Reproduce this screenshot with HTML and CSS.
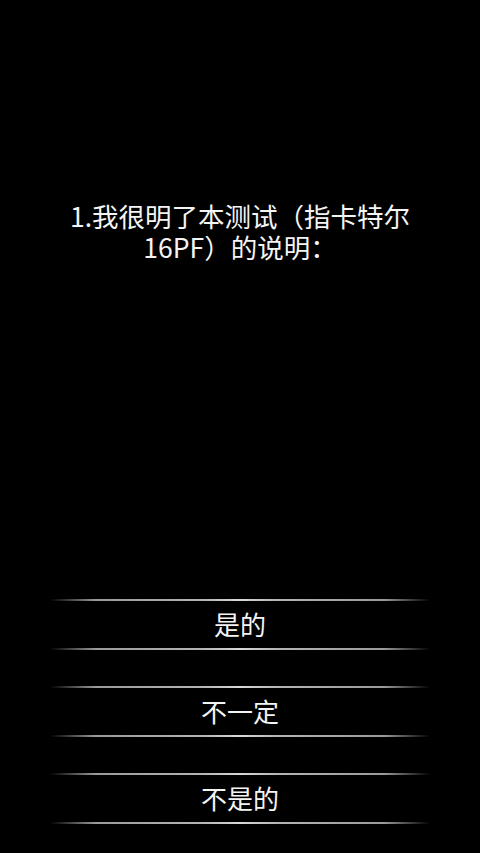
FILE: index.html
```html
<!DOCTYPE html>
<html lang="zh-CN">
<head>
<meta charset="utf-8">
<title>16PF</title>
<link rel="stylesheet" href="styles.css">
</head>
<body>
<main class="screen">
  <h1 class="question">1.我很明了本测试（指卡特尔16PF）的说明：</h1>
  <div class="options">
    <div class="option">是的</div>
    <div class="option">不一定</div>
    <div class="option">不是的</div>
  </div>
</main>
</body>
</html>
```

FILE: styles.css
```css
html, body {
  margin: 0;
  padding: 0;
  background: #000;
}
.screen {
  width: 480px;
  height: 853px;
  display: flex;
  flex-direction: column;
  align-items: center;
  background: #000;
  color: #f4f4f4;
  font-family: "Noto Sans CJK SC", "Noto Sans", sans-serif;
}
.question {
  margin: 200px 0 0;
  width: 370px;
  font-size: 26.5px;
  font-weight: normal;
  line-height: 31px;
  text-align: center;
}
.options {
  margin-top: auto;
  padding-bottom: 29px;
  display: flex;
  flex-direction: column;
  gap: 36px;
}
.option {
  position: relative;
  width: 380px;
  height: 51px;
  box-sizing: border-box;
  padding-bottom: 3px;
  display: flex;
  align-items: center;
  justify-content: center;
  font-size: 26px;
  color: #f4f4f4;
}
.option::before,
.option::after {
  content: "";
  position: absolute;
  left: 0;
  right: 0;
  height: 2px;
  background: linear-gradient(to right, rgba(170,170,170,0) 0%, #9a9a9a 12%, #b4b4b4 40%, #d8d8d8 50%, #b4b4b4 60%, #9a9a9a 88%, rgba(170,170,170,0) 100%);
}
.option::before { top: 0; }
.option::after { bottom: 0; }
```
